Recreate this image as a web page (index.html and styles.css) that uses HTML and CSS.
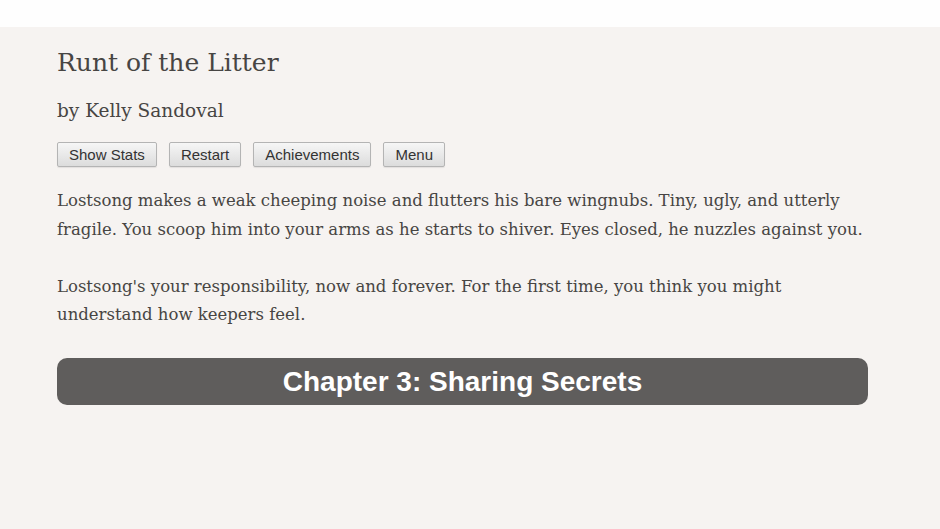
FILE: index.html
```html
<!DOCTYPE html>
<html>
<head>
<meta charset="UTF-8">
<title>Runt of the Litter</title>
<link rel="stylesheet" href="styles.css">
</head>
<body>

<div class="topbar"></div>

<div class="wrap">
    <h1 class="title">Runt of the Litter</h1>
    <h2 class="author">by Kelly Sandoval</h2>

    <div class="btn-row">
        <button class="btn">Show Stats</button>
        <button class="btn">Restart</button>
        <button class="btn">Achievements</button>
        <button class="btn">Menu</button>
    </div>

    <div class="story">
        <p>Lostsong makes a weak cheeping noise and flutters his bare wingnubs. Tiny, ugly, and utterly fragile. You scoop him into your arms as he starts to shiver. Eyes closed, he nuzzles against you.</p>
        <p>Lostsong's your responsibility, now and forever. For the first time, you think you might understand how keepers feel.</p>
    </div>

    <div class="chapter">Chapter 3: Sharing Secrets</div>
</div>

</body>
</html>
```

FILE: styles.css
```css
* {
    margin: 0;
    padding: 0;
    box-sizing: border-box;
}

html,
body {
    height: 100%;
}

body {
    display: flex;
    flex-direction: column;
    background: #f6f3f1;
    color: #474543;
    font-family: "DejaVu Serif", Georgia, serif;
}

.topbar {
    height: 27px;
    background: #fefefe;
}

.wrap {
    flex: 1;
    padding: 0 72px 0 57px;
}

.title {
    margin-top: 18px;
    font-size: 25px;
    line-height: 36px;
    font-weight: normal;
}

.author {
    margin-top: 17px;
    font-size: 18.5px;
    line-height: 26px;
    font-weight: normal;
}

.btn-row {
    display: flex;
    gap: 12px;
    margin-top: 18px;
}

.btn {
    height: 25px;
    padding: 0 11px;
    font-family: "Liberation Sans", Arial, sans-serif;
    font-size: 15px;
    color: #333;
    background: linear-gradient(#f6f6f6, #dcdcdc);
    border: 1px solid #b4b4b4;
    border-radius: 2px;
    box-shadow: 0 1px 1px rgba(0, 0, 0, 0.08);
}

.story {
    margin-top: 20px;
    font-size: 16.5px;
    line-height: 28.5px;
}

.story p + p {
    margin-top: 28.5px;
}

.chapter {
    margin-top: 28px;
    height: 47px;
    line-height: 47px;
    text-align: center;
    font-family: "Liberation Sans", Arial, sans-serif;
    font-size: 28px;
    font-weight: bold;
    color: #fff;
    background: #5f5d5c;
    border-radius: 10px;
}
```
